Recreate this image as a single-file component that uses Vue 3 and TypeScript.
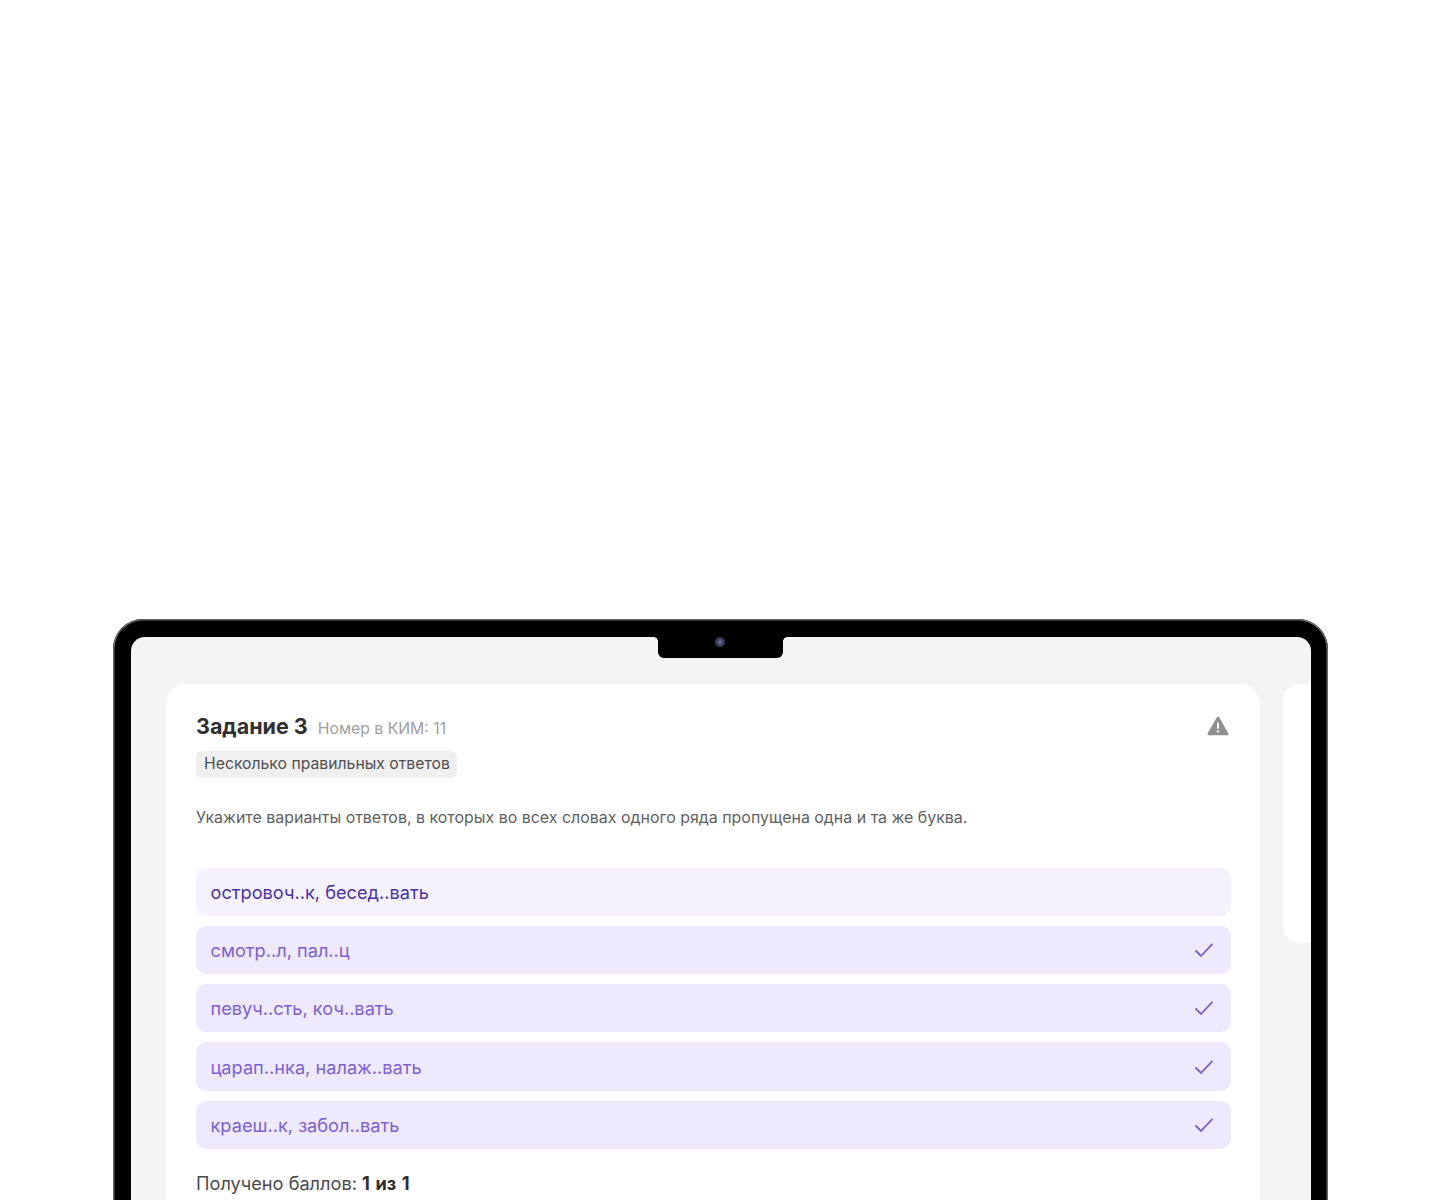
<script setup lang="ts">
const options = [
  { text: 'островоч..к, бесед..вать', correct: false },
  { text: 'смотр..л, пал..ц', correct: true },
  { text: 'певуч..сть, коч..вать', correct: true },
  { text: 'царап..нка, налаж..вать', correct: true },
  { text: 'краеш..к, забол..вать', correct: true },
]
</script>

<template>
  <div class="page">
    <div class="laptop">
      <div class="notch"><span class="camera"></span></div>
      <div class="screen">
        <div class="card">
          <div class="head">
            <div class="title-row">
              <h2>Задание 3</h2>
              <span class="kim">Номер в КИМ: 11</span>
            </div>
            <svg class="warn" width="22" height="20" viewBox="0 0 22 20">
              <path d="M11 2 L20.2 18 H1.8 Z" fill="#8f8f8f" stroke="#8f8f8f" stroke-width="2.6" stroke-linejoin="round" />
              <rect x="10" y="6.5" width="2" height="6.5" rx="1" fill="#fff" />
              <circle cx="11" cy="15.4" r="1.2" fill="#fff" />
            </svg>
          </div>
          <span class="tag">Несколько правильных ответов</span>
          <p class="question">Укажите варианты ответов, в которых во всех словах одного ряда пропущена одна и та же буква.</p>
          <div class="options">
            <div v-for="o in options" :key="o.text" :class="['option', { correct: o.correct }]">
              <span>{{ o.text }}</span>
              <svg v-if="o.correct" width="20" height="16" viewBox="0 0 20 16" fill="none">
                <path d="M1.5 8.5 L7 14 L18.5 1.8" stroke="#7a5fc4" stroke-width="1.8" />
              </svg>
            </div>
          </div>
          <div class="score">Получено баллов: <b>1 из 1</b></div>
        </div>
        <div class="side"></div>
      </div>
    </div>
  </div>
</template>

<style>
html, body { margin: 0; height: 1200px; overflow: hidden; background: #fff; }
</style>

<style scoped>
.page { height: 1200px; overflow: hidden; padding: 619px 112px 0 113px; box-sizing: border-box; font-family: Inter, "Noto Sans", sans-serif; }
.laptop { position: relative; height: 700px; background: #000; border-radius: 30px 30px 0 0; padding: 18px 17px 0 18px; box-shadow: inset 0 0 0 1.5px #666; }
.notch { position: absolute; top: 2px; left: 545px; width: 125px; height: 37px; background: #000; border-radius: 0 0 6px 6px; z-index: 1; }
.notch::before, .notch::after { content: ""; position: absolute; top: 16px; width: 4px; height: 4px; }
.notch::before { left: -4px; background: radial-gradient(circle at 0 100%, transparent 3.5px, #000 4px); }
.notch::after { right: -4px; background: radial-gradient(circle at 100% 100%, transparent 3.5px, #000 4px); }
.camera { position: absolute; top: 16px; left: 57px; width: 10px; height: 10px; border-radius: 50%; background: radial-gradient(circle, #77779c 0, #3b3b60 45%, #2c2c48 100%); }
.screen { display: flex; align-items: flex-start; gap: 23px; height: 100%; background: #f4f4f4; border-radius: 14px 14px 0 0; padding: 47px 0 0 35px; overflow: hidden; box-sizing: border-box; }
.card { width: 1094px; flex: none; height: 600px; background: #fff; border-radius: 20px; padding: 27px 29px 0 30px; box-sizing: border-box; }
.side { flex: 1; height: 259px; background: #fff; border-radius: 16px 0 0 16px; }
.head { display: flex; justify-content: space-between; align-items: center; height: 30px; }
.title-row { display: flex; align-items: baseline; gap: 10px; position: relative; top: -0.5px; }
h2 { margin: 0; font-size: 21.5px; font-weight: 700; color: #2f2f2f; }
.kim { font-size: 15.75px; color: #a0a0a0; }
.warn { margin-right: 2px; }
.tag { display: inline-block; margin-top: 10px; padding: 0 7px 0 8px; height: 27px; line-height: 26px; background: #efefef; border-radius: 6px; font-size: 15.75px; color: #4f4f4f; }
.question { margin: 26.5px 0 0; font-size: 15.95px; line-height: 26px; color: #5f5f5f; }
.options { display: flex; flex-direction: column; gap: 10px; margin-top: 37px; }
.option { display: flex; align-items: center; justify-content: space-between; height: 48.3px; padding: 0 17px 0 14.5px; background: #f5f2fe; border-radius: 10px; font-size: 18.2px; color: #4a35a0; }
.option.correct { background: #eee9fd; color: #7d62cf; }
.score { margin-top: 23px; font-size: 18.2px; color: #4b4b4b; }
.score b { color: #2f2f2f; word-spacing: 1.2px; }
</style>
